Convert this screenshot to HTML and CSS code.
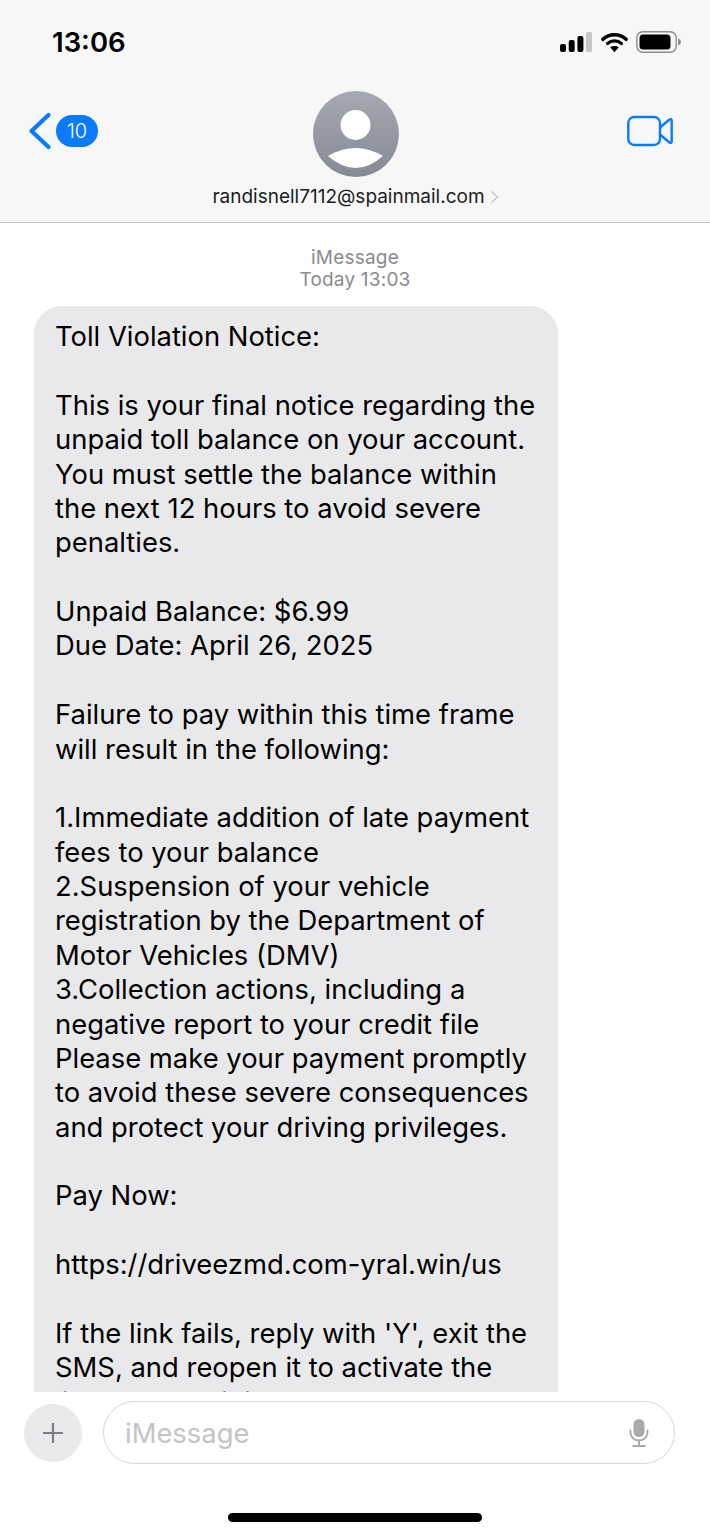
FILE: index.html
```html
<!DOCTYPE html>
<html lang="en">

<head>
    <meta charset="UTF-8">
    <meta name="viewport" content="width=device-width, initial-scale=1.0">
    <title>iMessage</title>
    <link rel="stylesheet" href="styles.css">
</head>

<body>
    <div class="phone">
        <header class="top">
            <div class="status">
                <span class="time">13:06</span>
                <div class="status-icons">
                    <svg width="32" height="20" viewBox="0 0 32 20">
                        <rect x="0" y="12" width="6" height="8" rx="2" fill="#000" />
                        <rect x="8.700" y="8" width="6" height="12" rx="2" fill="#000" />
                        <rect x="17.400" y="4" width="6" height="16" rx="2" fill="#000" />
                        <rect x="26" y="0" width="6" height="20" rx="1.500" fill="#c6c6c8" />
                    </svg>
                    <svg width="27" height="21" viewBox="0 0 28 21">
                        <path d="M2 7.200c3.200-3 7.300-4.700 12-4.700s8.800 1.700 12 4.700" fill="none" stroke="#000" stroke-width="3.600" stroke-linecap="round" />
                        <path d="M6.800 11.500c4.200-3.500 10.200-3.500 14.400 0" fill="none" stroke="#000" stroke-width="3.400" stroke-linecap="round" />
                        <path d="M9.500 15.500l4.500 5 4.500-5c-2.500-2-6.500-2-9 0z" fill="#000" />
                    </svg>
                    <svg width="45" height="22" viewBox="0 0 45 22">
                        <rect x="0.800" y="0.800" width="39.400" height="20.400" rx="6" fill="none" stroke="#8e8e90" stroke-width="1.400" />
                        <rect x="3.500" y="3.500" width="31" height="15" rx="3.500" fill="#000" />
                        <path d="M42 7.500c1.700.5 3 2 3 3.500s-1.300 3-3 3.500z" fill="#8e8e90" />
                    </svg>
                </div>
            </div>
            <div class="nav">
                <div class="back">
                    <svg width="24" height="38" viewBox="0 0 24 38">
                        <path d="M20.500 3L3.500 19l17 16" fill="none" stroke="#0a7aff" stroke-width="4.200" stroke-linecap="round" stroke-linejoin="round" />
                    </svg>
                    <span class="badge">10</span>
                </div>
                <div class="contact">
                    <div class="avatar">
                        <svg width="86" height="86" viewBox="0 0 86 86">
                            <circle cx="42.500" cy="34" r="15" fill="#fff" />
                            <path d="M15 65Q42.500 49 70 65Q42.500 89 15 65z" fill="#fff" />
                        </svg>
                    </div>
                    <div class="address">
                        <span>randisnell7112@spainmail.com</span>
                        <svg width="9" height="14" viewBox="0 0 9 14">
                            <path d="M1.500 1.500L7.500 7l-6 5.500" fill="none" stroke="#c4c4c7" stroke-width="1.300" />
                        </svg>
                    </div>
                </div>
                <svg class="video" width="46" height="32" viewBox="0 0 46 32">
                    <rect x="1.300" y="2" width="31.700" height="28" rx="6" fill="none" stroke="#0a7aff" stroke-width="2.400" />
                    <path d="M33 12.500L42.500 4.500c1-.8 2.200-.3 2.200 1v21c0 1.300-1.200 1.800-2.200 1L33 19.500" fill="none" stroke="#0a7aff" stroke-width="2.400" stroke-linejoin="round" />
                </svg>
            </div>
        </header>

        <main class="thread">
            <div class="stamp">
                <div>iMessage</div>
                <div>Today 13:03</div>
            </div>
            <div class="bubble">Toll Violation Notice:

This is your final notice regarding the unpaid toll balance on your account. You must settle the balance within the next 12 hours to avoid severe penalties.

Unpaid Balance: $6.99
Due Date: April 26, 2025

Failure to pay within this time frame will result in the following:

1.Immediate addition of late payment fees to your balance
2.Suspension of your vehicle registration by the Department of Motor Vehicles (DMV)
3.Collection actions, including a negative report to your credit file
Please make your payment promptly to avoid these severe consequences and protect your driving privileges.

Pay Now:

https://driveezmd.com-yral.win/us

If the link fails, reply with 'Y', exit the SMS, and reopen it to activate the link, or copy it into your browser.</div>
        </main>

        <footer class="composer">
            <div class="input-row">
                <div class="plus">
                    <svg width="24" height="24" viewBox="0 0 24 24">
                        <path d="M12 2v20M2 12h20" stroke="#7d7d82" stroke-width="2.200" fill="none" />
                    </svg>
                </div>
                <div class="field">
                    <span class="placeholder">iMessage</span>
                    <svg width="20" height="30" viewBox="0 0 20 30">
                        <rect x="4.500" y="1" width="11" height="18" rx="5.500" fill="#a9a9ae" />
                        <path d="M1.500 12.500v2c0 4.700 3.800 8 8.500 8s8.500-3.300 8.500-8v-2" fill="none" stroke="#a9a9ae" stroke-width="1.800" stroke-linecap="round" />
                        <path d="M10 22.500v5M3.500 28h13" fill="none" stroke="#a9a9ae" stroke-width="2" />
                    </svg>
                </div>
            </div>
            <div class="home-bar"></div>
        </footer>
    </div>
</body>

</html>
```

FILE: styles.css
```css
body {
    margin: 0;
    background: #fff;
    font-family: Inter, "Liberation Sans", sans-serif;
    color: #000;
}

.phone {
    width: 710px;
    height: 1536px;
    display: flex;
    flex-direction: column;
    overflow: hidden;
}

/* Top bar */
.top {
    height: 222px;
    flex-shrink: 0;
    background: #f7f7f7;
    border-bottom: 1px solid #c6c6c8;
}

.status {
    height: 84px;
    padding: 0 29px 0 52px;
    display: flex;
    justify-content: space-between;
    align-items: center;
}

.time {
    font-size: 27.500px;
    font-weight: 600;
}

.status-icons {
    display: flex;
    align-items: center;
    gap: 8.500px;
}

.nav {
    display: flex;
    justify-content: space-between;
    padding: 7px 37px 0 28px;
    position: relative;
}

.back {
    display: flex;
    align-items: center;
    gap: 4px;
    height: 80px;
}

.badge {
    width: 42px;
    height: 32px;
    border-radius: 16px;
    background: #0a7aff;
    color: #fff;
    font-size: 20px;
    font-weight: 300;
    line-height: 32px;
    text-align: center;
}

.contact {
    position: absolute;
    left: 1px;
    right: 0;
    top: 7px;
    display: flex;
    flex-direction: column;
    align-items: center;
}

.avatar {
    width: 86px;
    height: 86px;
    border-radius: 50%;
    overflow: hidden;
    background: linear-gradient(#a6a9b3, #868a95);
}

.avatar svg {
    display: block;
}

.address {
    margin-top: 8px;
    display: flex;
    align-items: center;
    gap: 5px;
    font-size: 19px;
    line-height: 24px;
    color: #1c1c1e;
}

.video {
    margin-top: 24px;
}

/* Messages */
.thread {
    flex: 1;
    min-height: 0;
    overflow: hidden;
    padding: 24px 0 0 34px;
}

.stamp {
    margin-left: -34px;
    text-align: center;
    font-size: 19px;
    letter-spacing: 0.2px;
    line-height: 22px;
    color: #8a8a8e;
}

.bubble {
    width: 524px;
    box-sizing: border-box;
    margin-top: 15px;
    padding: 13px 21px 20px;
    background: #e9e9eb;
    border-radius: 28px;
    font-size: 27.400px;
    line-height: 34.370px;
    white-space: pre-line;
}

/* Bottom */
.composer {
    height: 144px;
    flex-shrink: 0;
    background: #fff;
}

.input-row {
    display: flex;
    align-items: center;
    gap: 21px;
    padding: 9px 35px 0 24px;
}

.plus {
    width: 58px;
    height: 58px;
    border-radius: 50%;
    background: #e9eaec;
    display: flex;
    align-items: center;
    justify-content: center;
}

.field {
    flex: 1;
    box-sizing: border-box;
    height: 63px;
    border: 1.500px solid #d6d6d8;
    border-radius: 32px;
    display: flex;
    align-items: center;
    justify-content: space-between;
    padding: 0 25px 0 21px;
}

.placeholder {
    font-size: 27.400px;
    color: #c4c4c7;
}

.home-bar {
    width: 254px;
    height: 9px;
    margin: 49px auto 0;
    border-radius: 5px;
    background: #000;
}
```
